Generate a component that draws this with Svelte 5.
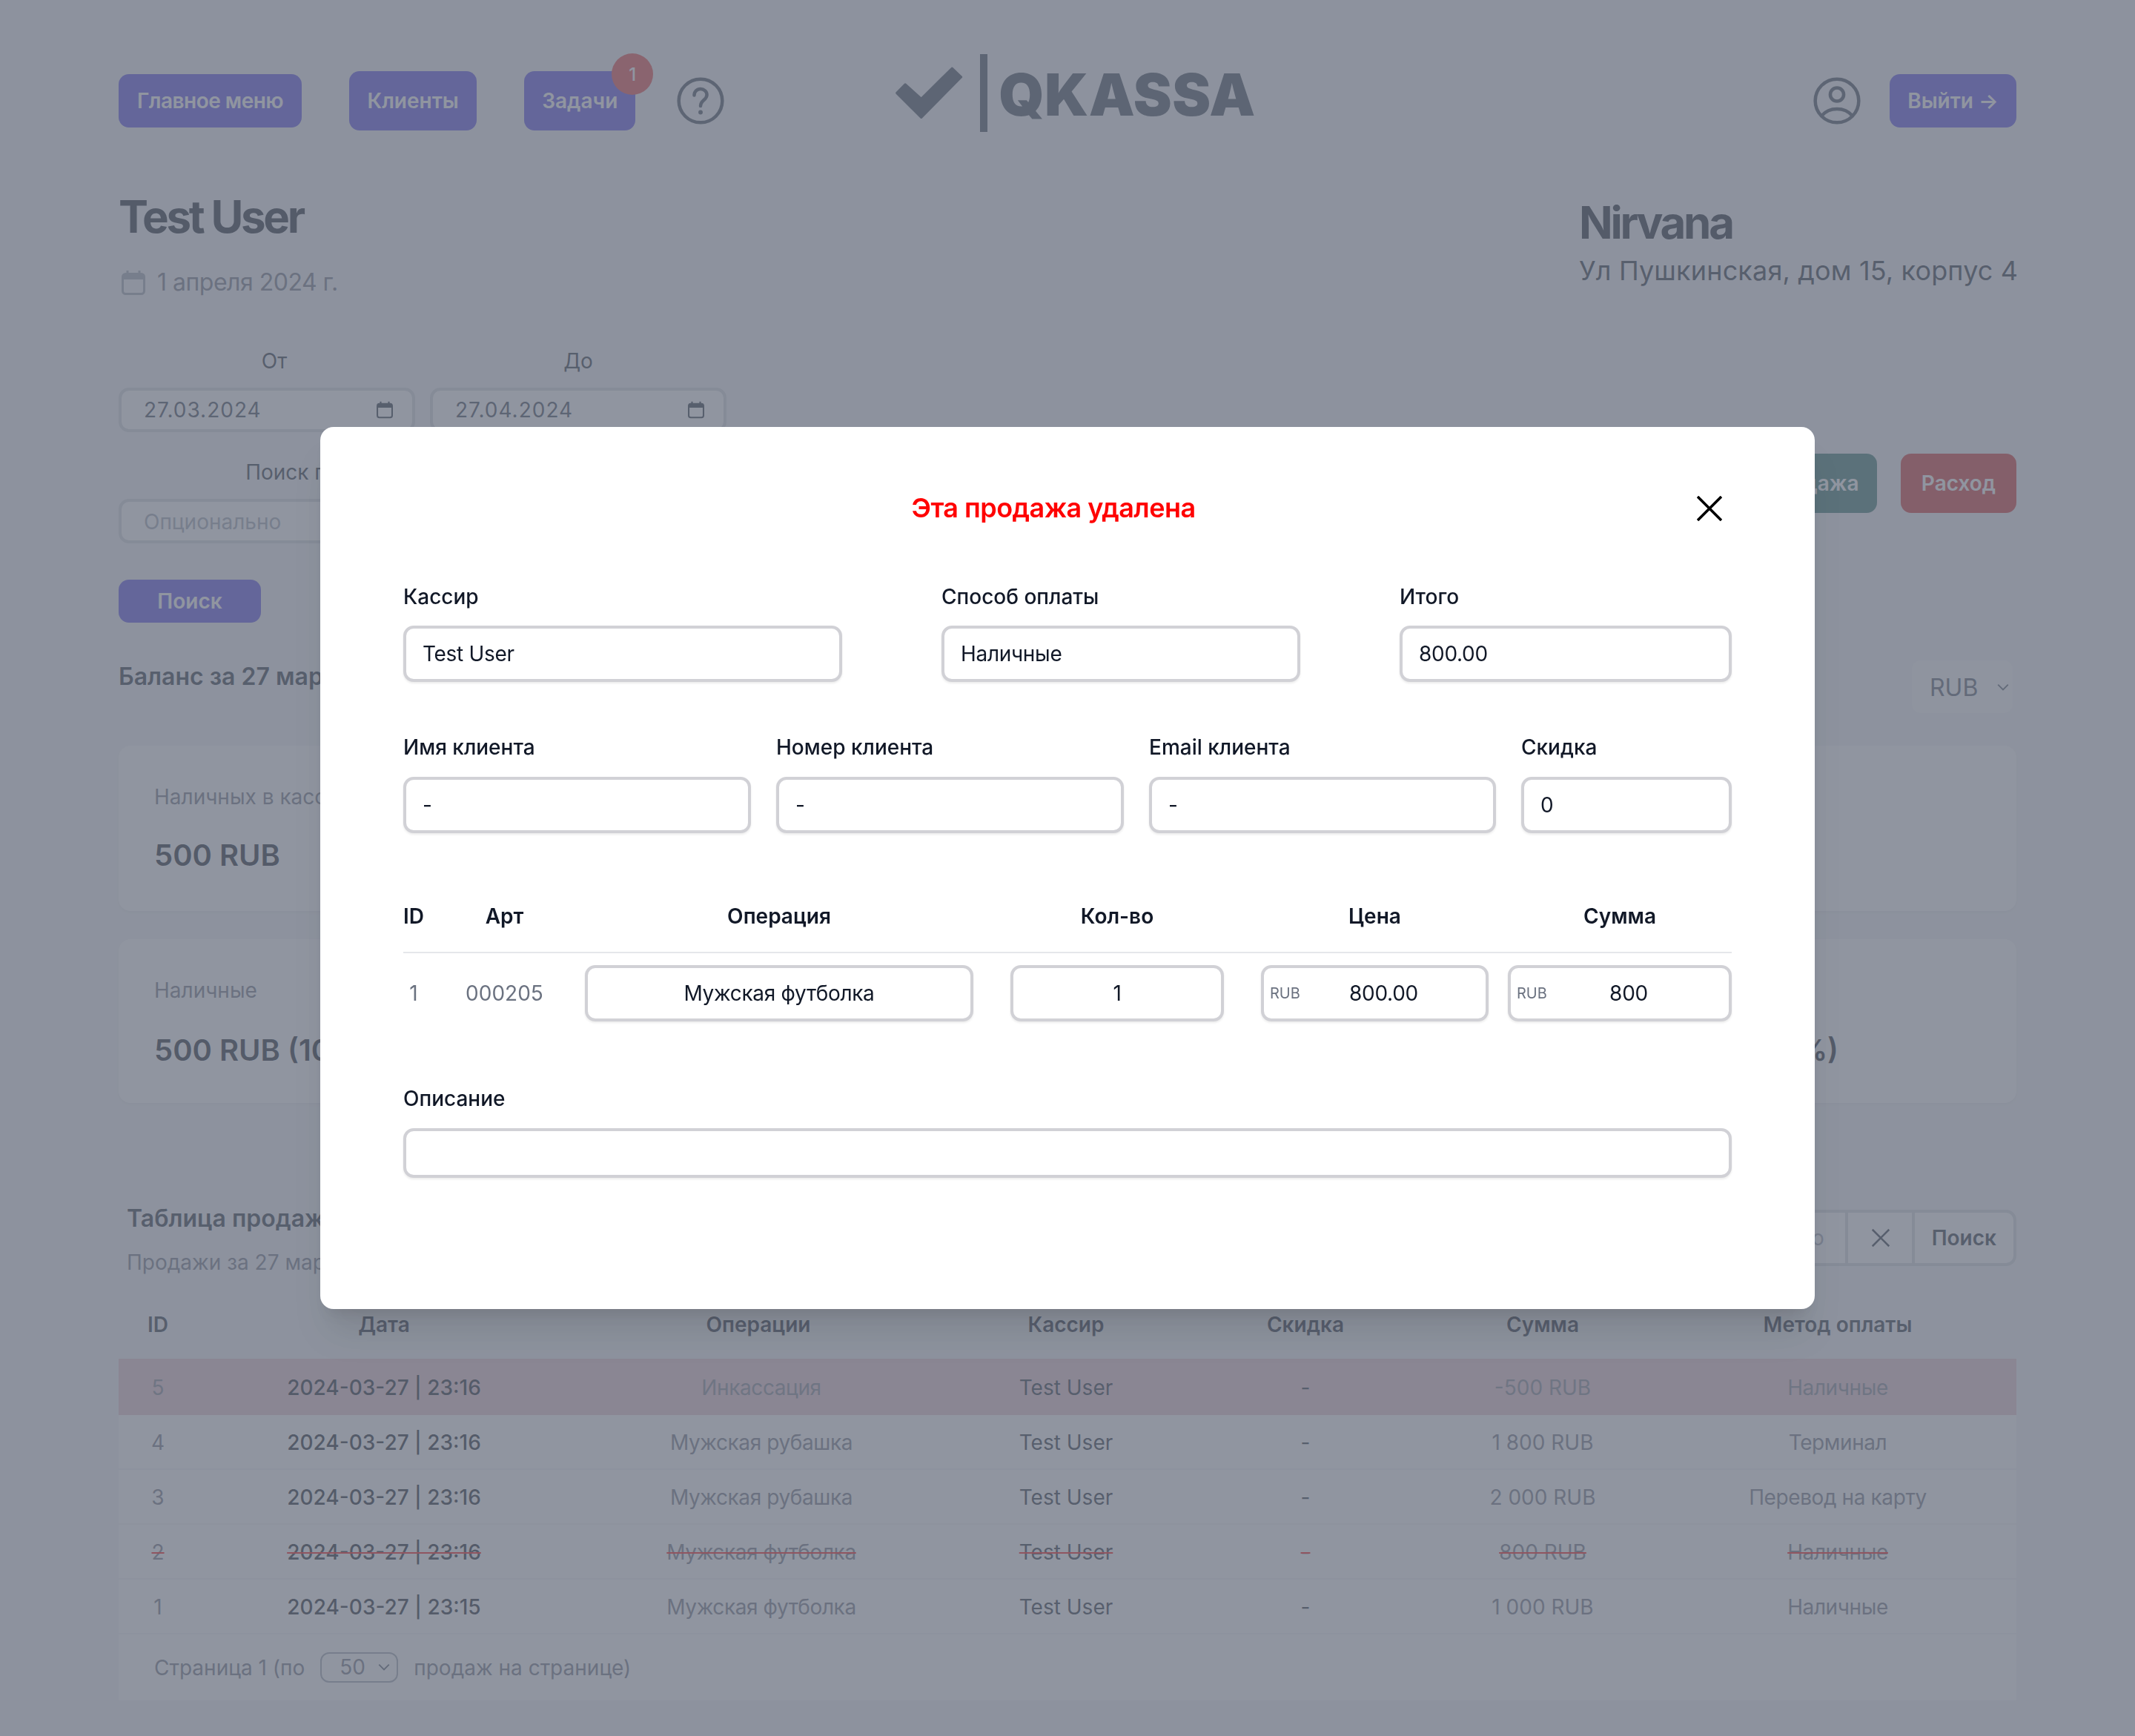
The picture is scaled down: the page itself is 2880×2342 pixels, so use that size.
<script>
  const sales = [
    { id: 5, date: '2024-03-27 | 23:16', op: 'Инкассация', disc: '-', sum: '-500 RUB', method: 'Наличные', kind: 'out' },
    { id: 4, date: '2024-03-27 | 23:16', op: 'Мужская рубашка', disc: '-', sum: '1 800 RUB', method: 'Терминал', kind: '' },
    { id: 3, date: '2024-03-27 | 23:16', op: 'Мужская рубашка', disc: '-', sum: '2 000 RUB', method: 'Перевод на карту', kind: '' },
    { id: 2, date: '2024-03-27 | 23:16', op: 'Мужская футболка', disc: '-', sum: '800 RUB', method: 'Наличные', kind: 'deleted' },
    { id: 1, date: '2024-03-27 | 23:15', op: 'Мужская футболка', disc: '-', sum: '1 000 RUB', method: 'Наличные', kind: '' }
  ];
</script>

{#snippet calendar(cls)}
  <svg class={cls} viewBox="0 0 32 33">
    <path d="M8 0v5M24 0v5" stroke="currentColor" stroke-width="3" />
    <rect x="1.5" y="4.5" width="29" height="27" rx="4" fill="none" stroke="currentColor" stroke-width="3" />
    <path d="M1.5 9a4 4 0 0 1 4-4h21a4 4 0 0 1 4 4v3h-29z" fill="currentColor" />
  </svg>
{/snippet}

{#snippet chevron(cls)}
  <svg class={cls} viewBox="0 0 16 10" fill="none" stroke="currentColor" stroke-width="1.6">
    <path d="M2 2l6 6 6-6" />
  </svg>
{/snippet}

<div class="page">
  <header class="topbar">
    <nav class="nav">
      <button class="btn primary small menu">Главное меню</button>
      <button class="btn primary">Клиенты</button>
      <div class="badge-wrap">
        <button class="btn primary tasks">Задачи</button>
        <span class="badge">1</span>
      </div>
      <svg class="help" viewBox="0 0 24 24" fill="none" stroke="currentColor" stroke-width="1.7">
        <circle cx="12" cy="12" r="11" />
        <path d="M8.8 9.2c0-1.9 1.4-3.2 3.2-3.2s3.2 1.3 3.2 3c0 2.6-3.2 2.7-3.2 5.6" stroke-linecap="round" />
        <circle cx="12" cy="17.8" r="1.1" fill="currentColor" stroke="none" />
      </svg>
    </nav>
    <div class="logo">
      <svg class="check" viewBox="35 80 285 220">
        <path d="M46 190L80 155L145 214L270 90L307 125L145 289Z" fill="currentColor" stroke="currentColor" stroke-width="10" stroke-linejoin="round" />
      </svg>
      <span class="logo-bar"></span>
      <span class="logo-text">QKASSA</span>
    </div>
    <div class="account">
      <svg class="user" viewBox="0 0 24 24" fill="none" stroke="currentColor" stroke-width="1.7">
        <circle cx="12" cy="12" r="11" />
        <circle cx="12" cy="8.8" r="3.4" />
        <path d="M4.2 19.6c4-4.6 11.6-4.6 15.6 0" />
      </svg>
      <button class="btn primary small logout">Выйти →</button>
    </div>
  </header>

  <section class="title-row">
    <div>
      <h1>Test User</h1>
      <p class="today">{@render calendar('today-icon')}1 апреля 2024 г.</p>
    </div>
    <div class="shop">
      <h2>Nirvana</h2>
      <p>Ул Пушкинская, дом 15, корпус 4</p>
    </div>
  </section>

  <section class="filters">
    <form class="filter-form">
      <div class="dates">
        <div class="date-field">
          <span class="flabel from">От</span>
          <div class="date-input">27.03.2024 {@render calendar('date-icon')}</div>
        </div>
        <div class="date-field">
          <span class="flabel">До</span>
          <div class="date-input">27.04.2024 {@render calendar('date-icon')}</div>
        </div>
      </div>
      <span class="flabel search-label">Поиск по названию или артикулу</span>
      <div class="date-input placeholder">Опционально</div>
      <button type="button" class="btn primary find">Поиск</button>
    </form>
    <div class="actions">
      <button class="btn sale">Продажа</button>
      <button class="btn expense">Расход</button>
    </div>
  </section>

  <section class="balance-row">
    <h3>Баланс за 27 марта</h3>
    <div class="currency">RUB {@render chevron('cur-chevron')}</div>
  </section>

  <section class="card first">
    <p class="card-label">Наличных в кассе</p>
    <p class="card-value">500 RUB</p>
  </section>
  <section class="card second">
    <div>
      <p class="card-label">Наличные</p>
      <p class="card-value">500 RUB (100%)</p>
    </div>
    <div>
      <p class="card-label">Терминал</p>
      <p class="card-value">0 RUB (0%)</p>
    </div>
  </section>

  <section class="table-head">
    <div>
      <h3>Таблица продаж</h3>
      <p>Продажи за 27 марта</p>
    </div>
    <div class="search">
      <span class="search-text">Поиск по</span>
      <span class="search-clear">
        <svg viewBox="0 0 24 24" fill="none" stroke="currentColor" stroke-width="2"><path d="M3 3l18 18M21 3L3 21" /></svg>
      </span>
      <span class="search-go">Поиск</span>
    </div>
  </section>

  <div class="sales">
    <div class="srow shead">
      <span>ID</span><span>Дата</span><span class="head-op">Операции</span><span>Кассир</span><span>Скидка</span><span>Сумма</span><span class="method">Метод оплаты</span>
    </div>
    {#each sales as s}
      <div class="srow sale-row {s.kind}">
        <span class="muted"><s-x>{s.id}</s-x></span>
        <span class="strong"><s-x>{s.date}</s-x></span>
        <span class="muted tight"><s-x>{s.op}</s-x></span>
        <span class="mid"><s-x>Test User</s-x></span>
        <span class="mid"><s-x>{s.disc}</s-x></span>
        <span class="muted"><s-x>{s.sum}</s-x></span>
        <span class="muted method tight"><s-x>{s.method}</s-x></span>
      </div>
    {/each}
    <div class="pager">
      Страница 1 (по
      <div class="page-size">50 {@render chevron('size-chevron')}</div>
      продаж на странице)
    </div>
  </div>
</div>

<div class="overlay">
  <div class="modal">
    <div class="modal-top">
      <h4>Эта продажа удалена</h4>
      <button class="close" aria-label="Закрыть">
        <svg viewBox="0 0 34 34" fill="none" stroke="#000" stroke-width="3.6"><path d="M1 1l32 32M33 1L1 33" /></svg>
      </button>
    </div>

    <div class="row-a">
      <label>Кассир<input readonly value="Test User" /></label>
      <label>Способ оплаты<input readonly value="Наличные" /></label>
      <label>Итого<input readonly value="800.00" /></label>
    </div>

    <div class="row-b">
      <label>Имя клиента<input readonly value="-" /></label>
      <label>Номер клиента<input readonly value="-" /></label>
      <label>Email клиента<input readonly value="-" /></label>
      <label>Скидка<input readonly value="0" /></label>
    </div>

    <div class="items items-head">
      <span class="left">ID</span>
      <span>Арт</span>
      <span>Операция</span>
      <span>Кол-во</span>
      <span>Цена</span>
      <span class="last">Сумма</span>
    </div>
    <div class="items items-body">
      <span class="gray">1</span>
      <span class="gray">000205</span>
      <input class="center" readonly value="Мужская футболка" />
      <input class="center qty" readonly value="1" />
      <div class="money">
        <em>RUB</em>
        <input class="center" readonly value="800.00" />
      </div>
      <div class="money last">
        <em>RUB</em>
        <input class="center" readonly value="800" />
      </div>
    </div>

    <label class="desc">Описание<input readonly value="" /></label>
  </div>
</div>

<style>
  :global(body) {
    margin: 0;
    background: #f3f4f6;
    font-family: Inter, "Noto Sans", sans-serif;
    color: #111827;
  }

  .page {
    height: 2342px;
    box-sizing: border-box;
    padding: 72px 160px 0;
    overflow: hidden;
  }

  p, h1, h2, h3, h4 {
    margin: 0;
  }

  .topbar {
    display: flex;
    align-items: center;
    height: 128px;
  }

  .nav {
    display: flex;
    align-items: center;
    gap: 64px;
  }

  .btn {
    height: 80px;
    padding: 0 24.5px;
    border: 0;
    border-radius: 14px;
    font: 600 28px Inter, sans-serif;
    color: #fff;
  }

  .small {
    height: 72px;
  }

  .primary {
    background: #4f46e5;
  }

  .menu {
    width: 247px;
    padding: 0;
    letter-spacing: -0.5px;
  }

  .tasks {
    width: 150px;
    padding: 0;
  }

  .badge-wrap {
    position: relative;
    margin-right: -8px;
  }

  .badge {
    position: absolute;
    top: -24px;
    right: -24px;
    width: 56px;
    height: 56px;
    border-radius: 50%;
    background: #e53e3e;
    color: #fff;
    font-size: 24px;
    font-weight: 500;
    display: flex;
    align-items: center;
    justify-content: center;
  }

  .help, .user {
    width: 64px;
    height: 64px;
    color: #374151;
  }

  .logo {
    display: flex;
    align-items: center;
    margin: -22px 0 0 229px;
    color: #374151;
  }

  .check {
    width: 95px;
    height: 73px;
  }

  .logo-bar {
    width: 10px;
    height: 105px;
    margin: 0 15px 0 21px;
    background: #374151;
  }

  .logo-text {
    margin-top: 6px;
    font-size: 78px;
    font-weight: 900;
    line-height: 1;
    letter-spacing: 0.4px;
  }

  .account {
    margin-left: auto;
    display: flex;
    align-items: center;
    gap: 39px;
  }

  .logout {
    width: 171px;
    padding: 0;
  }

  .title-row {
    display: flex;
    justify-content: space-between;
    margin-top: 56px;
  }

  h1, h2 {
    font-size: 60px;
    line-height: 72px;
    font-weight: 700;
    letter-spacing: -3.3px;
  }

  .today {
    display: flex;
    align-items: center;
    gap: 16px;
    margin-top: 29px;
    padding-left: 4px;
    font-size: 32px;
    line-height: 48px;
    letter-spacing: -0.5px;
    color: #6b7280;
  }

  .today :global(.today-icon) {
    width: 32px;
    height: 33px;
    color: #9ca3af;
  }

  .shop {
    margin-top: 8px;
    width: 590px;
  }

  .shop p {
    margin-top: 5px;
    font-size: 36px;
    line-height: 48px;
    letter-spacing: 0.15px;
    color: #1f2937;
    white-space: nowrap;
  }

  .filters {
    display: flex;
    justify-content: space-between;
    margin-top: 62px;
  }

  .filter-form {
    display: flex;
    flex-direction: column;
    width: 820px;
  }

  .dates {
    display: flex;
    gap: 20px;
  }

  .date-field {
    flex: 1;
    display: flex;
    flex-direction: column;
  }

  .flabel {
    font-size: 28px;
    line-height: 40px;
    text-align: center;
    color: #1f2937;
  }

  .from {
    padding-left: 20px;
  }

  .date-input {
    display: flex;
    align-items: center;
    justify-content: space-between;
    box-sizing: border-box;
    height: 60px;
    margin-top: 16px;
    padding: 0 26px 0 30px;
    border: 4px solid #d1d5db;
    border-radius: 14px;
    background: #fff;
    font-size: 28px;
    letter-spacing: 1px;
    color: #374151;
  }

  .date-input :global(.date-icon) {
    width: 22px;
    height: 24px;
    color: #1f2937;
  }

  .search-label {
    margin-top: 34px;
    padding-right: 20px;
  }

  .placeholder {
    padding: 2px 0 0 30px;
    letter-spacing: 0;
    color: #9ca3af;
  }

  .find {
    width: 192px;
    height: 58px;
    margin-top: 49px;
    padding: 0;
  }

  .actions {
    display: flex;
    gap: 32px;
    margin-top: 145px;
  }

  .sale {
    background: #2f7068;
  }

  .expense {
    width: 156px;
    padding: 0;
    background: #cf2b2b;
  }

  .balance-row {
    display: flex;
    justify-content: space-between;
    height: 75px;
    margin-top: 49px;
  }

  h3 {
    font-size: 32px;
    line-height: 48px;
    font-weight: 600;
    color: #1f2937;
  }

  .currency {
    display: flex;
    align-items: center;
    box-sizing: border-box;
    width: 140px;
    height: 75px;
    margin-right: 3px;
    padding: 2px 0 0 24px;
    border: 2px solid #f3f4f6;
    border-radius: 14px;
    background: #f9fafb;
    font-size: 32px;
    color: #4b5563;
    position: relative;
  }

  .currency :global(.cur-chevron) {
    position: absolute;
    right: 4px;
    top: 30px;
    width: 18px;
    height: 12px;
  }

  .card {
    box-sizing: border-box;
    margin-top: 42px;
    padding: 49px 48px 0;
    border-radius: 16px;
    background: #fff;
    box-shadow: 0 2px 4px rgba(0, 0, 0, 0.05);
  }

  .first {
    height: 223px;
  }

  .second {
    display: flex;
    justify-content: space-between;
    height: 221px;
    margin-top: 38px;
    padding-right: 240px;
  }

  .card-label {
    font-size: 28px;
    line-height: 40px;
    color: #6b7280;
  }

  .card-value {
    margin-top: 31px;
    font-size: 40px;
    line-height: 56px;
    font-weight: 600;
    white-space: nowrap;
    color: #111827;
  }

  .second .card-value {
    margin-top: 33px;
  }

  .table-head {
    display: flex;
    justify-content: space-between;
    margin-top: 132px;
    padding-left: 11px;
  }

  .table-head p {
    margin-top: 15px;
    font-size: 28px;
    line-height: 40px;
    color: #6b7280;
  }

  .search {
    display: flex;
    align-items: stretch;
    box-sizing: border-box;
    height: 76px;
    margin-top: 12px;
    border: 4px solid #d1d5db;
    border-radius: 14px;
    background: #fff;
    font-size: 28px;
  }

  .search-text {
    width: 300px;
    padding-right: 28px;
    text-align: right;
    line-height: 68px;
    color: #9ca3af;
  }

  .search-clear {
    display: flex;
    align-items: center;
    justify-content: center;
    width: 86px;
    border-left: 4px solid #d1d5db;
    border-right: 4px solid #d1d5db;
    color: #1f2937;
  }

  .search-clear svg {
    width: 30px;
    height: 30px;
    margin-left: 2px;
  }

  .search-go {
    padding: 0 23px;
    line-height: 68px;
    font-weight: 600;
    color: #1f2937;
  }

  .sales {
    margin-top: 24px;
  }

  .srow {
    display: grid;
    grid-template-columns: 106px 504px 514px 308px 338px 302px 488px;
    align-items: center;
    text-align: center;
    font-size: 28px;
  }

  .shead {
    height: 80px;
    font-weight: 600;
    color: #1f2937;
    margin-bottom: 6px;
  }

  .head-op {
    padding-right: 8px;
  }

  .method {
    padding-left: 6px;
  }

  .sale-row {
    height: 74px;
    padding-top: 2px;
    background: #fff;
    border-bottom: 2px solid #f3f4f6;
    box-sizing: border-box;
  }

  .sale-row.out {
    height: 76px;
    background: #e7c2cc;
    border-bottom: 0;
  }

  .sale-row.out .muted {
    color: #7c808d;
  }

  .deleted s-x {
    text-decoration: line-through #f00 2px;
  }

  .muted {
    color: #6b7280;
  }

  .tight {
    letter-spacing: -0.4px;
  }

  .strong {
    font-weight: 500;
    color: #111827;
  }

  .mid {
    color: #1f2937;
  }

  .pager {
    display: flex;
    align-items: center;
    gap: 21px;
    box-sizing: border-box;
    height: 89px;
    padding-left: 48px;
    background: #fff;
    font-size: 28px;
    color: #6b7280;
  }

  .page-size {
    position: relative;
    box-sizing: border-box;
    width: 105px;
    height: 41px;
    padding-left: 24px;
    border: 2px solid #9ca3af;
    border-radius: 12px;
    line-height: 37px;
  }

  .page-size :global(.size-chevron) {
    position: absolute;
    right: 8px;
    top: 12px;
    width: 18px;
    height: 12px;
    color: #4b5563;
  }

  .overlay {
    position: fixed;
    inset: 0;
    display: flex;
    justify-content: center;
    align-items: flex-start;
    padding-top: 576px;
    background: rgba(107, 114, 128, 0.75);
  }

  .modal {
    box-sizing: border-box;
    width: 2016px;
    height: 1190px;
    padding: 85px 112px 0;
    border-radius: 18px;
    background: #fff;
    box-shadow: 0 40px 50px -10px rgba(0, 0, 0, 0.1), 0 16px 20px -12px rgba(0, 0, 0, 0.1);
  }

  .modal-top {
    display: flex;
    align-items: center;
    height: 48px;
  }

  h4 {
    width: 1754px;
    font-size: 36px;
    font-weight: 600;
    letter-spacing: -0.55px;
    text-align: center;
    color: #f00;
  }

  .close {
    width: 47px;
    height: 34px;
    margin: 2px 0 0 -9px;
    padding: 0;
    border: 0;
    background: none;
    text-align: left;
  }

  .close svg {
    display: block;
    width: 34px;
    height: 34px;
  }

  label {
    display: flex;
    flex-direction: column;
    gap: 19px;
    font-size: 28px;
    line-height: 40px;
    font-weight: 500;
  }

  input {
    box-sizing: border-box;
    width: 100%;
    height: 76px;
    padding: 0 22px;
    border: 4px solid #d1d1d6;
    border-radius: 14px;
    outline: none;
    background: #fff;
    box-shadow: 0 2px 3px rgba(0, 0, 0, 0.08);
    font: 400 28px Inter, sans-serif;
    letter-spacing: -0.3px;
    color: #111827;
  }

  .row-a {
    display: grid;
    grid-template-columns: 592px 484px 448px;
    gap: 134px;
    margin-top: 76px;
  }

  .row-b {
    display: grid;
    grid-template-columns: 469px 469px 468px 284px;
    gap: 34px;
    margin-top: 68px;
  }

  .row-b label {
    gap: 20px;
  }

  .items {
    display: grid;
    grid-template-columns: 28px 217px 524px 388px 307px 328px;
    align-items: center;
    text-align: center;
  }

  .items-head {
    margin-top: 92px;
    padding-bottom: 28px;
    border-bottom: 2px solid #e5e7eb;
    font-size: 28px;
    line-height: 40px;
    font-weight: 600;
  }

  .items-head .left {
    text-align: left;
  }

  .items-head .last {
    padding-left: 26px;
  }

  .items-body {
    padding-top: 16px;
    font-size: 28px;
  }

  .gray {
    color: #6b7280;
  }

  .center {
    text-align: center;
  }

  .qty {
    width: 288px;
    margin-left: 50px;
  }

  .money {
    position: relative;
  }

  .money.last {
    margin-left: 26px;
  }

  .money em {
    position: absolute;
    left: 12px;
    top: 26px;
    font-style: normal;
    font-size: 20px;
    line-height: 24px;
    color: #6b7280;
  }

  .money input {
    padding: 0 0 0 24px;
  }

  .desc {
    margin-top: 84px;
    gap: 20px;
  }

  .desc input {
    height: 67px;
  }
</style>
